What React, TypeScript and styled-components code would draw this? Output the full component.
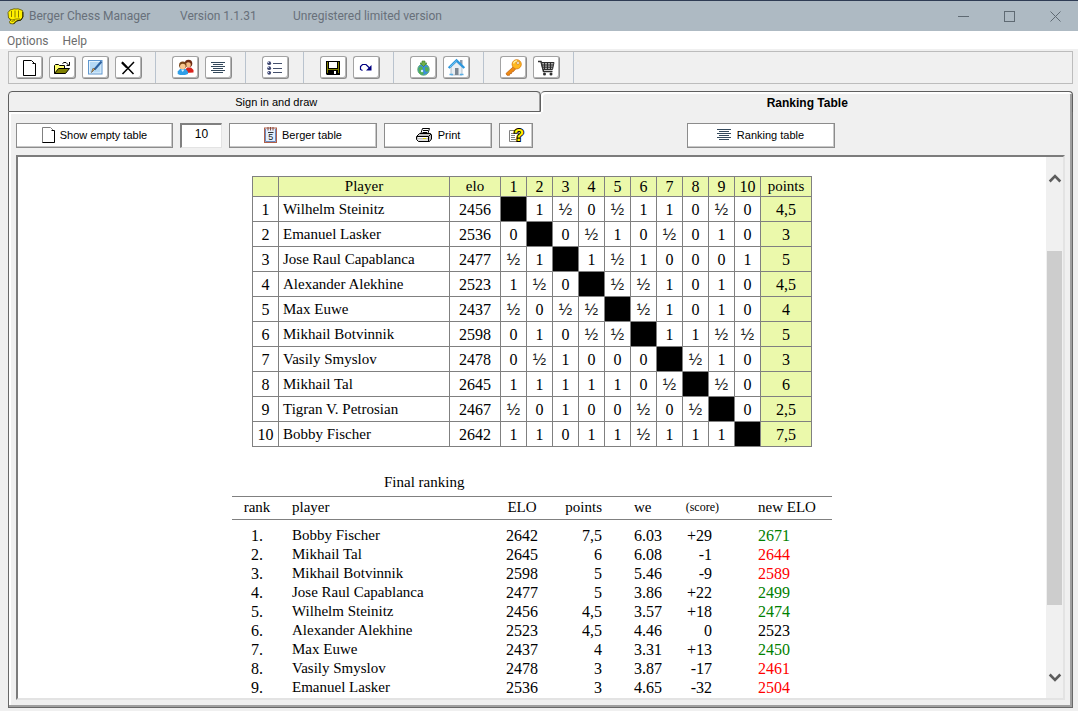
import React from "react";
import styled, { createGlobalStyle, css } from "styled-components";

const Global = createGlobalStyle`
  * { box-sizing: border-box; }
  html, body { margin: 0; padding: 0; background: #f0f0f0; }
  button, input { font: inherit; color: inherit; margin: 0; }
`;

const ui = `"Liberation Sans", Arial, sans-serif`;
const shell = `Roboto, "Open Sans", sans-serif`;
const serif = `"Liberation Serif", "Times New Roman", serif`;

const Window = styled.div`
  display: flex;
  flex-direction: column;
  height: 100vh;
  min-height: 480px;
  padding-bottom: 3px;
  background: #f0f0f0;
  color: #000;
  font: 11px/14px ${ui};
`;

const TitleBar = styled.header`
  display: flex;
  align-items: center;
  height: 31px;
  flex: none;
  border-top: 1px solid #2f3c54;
  background: #aebac3;
  color: #68707a;
  font: 12px/16px ${shell};
  padding-left: 7px;
`;

const TitleText = styled.span<{ $w?: number }>`
  min-width: ${(p) => (p.$w ? p.$w + "px" : "auto")};
  white-space: nowrap;
`;

const AppIcon = styled.span`
  display: flex;
  width: 22px;
`;

const WindowButtons = styled.div`
  display: flex;
  margin-left: auto;
`;

const WindowButton = styled.button`
  display: flex;
  align-items: center;
  justify-content: center;
  width: 46px;
  height: 30px;
  padding: 0;
  border: 0;
  background: none;
`;

const MenuBar = styled.nav`
  display: flex;
  align-items: center;
  gap: 14px;
  height: 18px;
  flex: none;
  padding: 2px 0 0 7px;
  background: #fff;
  color: #6d6d6d;
  font: 12px/16px ${shell};
`;

const MenuItem = styled.button`
  padding: 0;
  border: 0;
  background: none;
`;

const Toolbar = styled.div`
  display: flex;
  height: 33px;
  flex: none;
  margin: 2px 5px 0 8px;
  border: 1px solid #bcbcbc;
`;

const ToolGroup = styled.div<{ $first?: boolean }>`
  display: flex;
  align-items: center;
  gap: 6px;
  min-width: 58px;
  padding: 0 13px 0 ${(p) => (p.$first ? 7 : 16)}px;
  border-right: 1px solid #b9c3ce;
`;

const ToolButton = styled.button`
  display: flex;
  align-items: center;
  justify-content: center;
  width: 27px;
  height: 23px;
  padding: 0 1px 0 0;
  border: 1px solid #8b8b8b;
  border-top-color: #a3a3a3;
  border-left-color: #a3a3a3;
  border-radius: 3px;
  background: #fff;
  box-shadow: inset -1px -1px 0 #b4b4b4;
`;

const TabList = styled.div`
  display: grid;
  grid-template-columns: 1fr 1fr;
  flex: none;
  margin: 7px 5px 0 8px;
`;

const Tab = styled.button<{ $active?: boolean }>`
  height: 21px;
  padding: 0;
  background: #f0f0f0;
  border: 1px solid #5f5f5f;
  border-radius: 4px 4px 0 0;
  ${(p) =>
    p.$active
      ? css`
          border-left: 0;
          border-bottom: 0;
          box-shadow: inset 2px 2px 0 #fff, inset -2px 0 0 #a0a0a0;
          font-weight: bold;
          font-size: 12px;
          padding: 2px 0 0 2px;
        `
      : css`
          padding-left: 4px;
          box-shadow: inset -1px 0 0 #a0a0a0, 0 2px 0 #fff;
        `}
`;

const Panel = styled.section`
  display: flex;
  flex-direction: column;
  flex: 1;
  min-height: 0;
  margin: 0 5px 0 8px;
  padding: 11px 7px 7px 7px;
  border: 1px solid #696969;
  border-top: 0;
  box-shadow: inset -2px -2px 0 #a0a0a0, inset 2px 0 0 #fff;
`;

const Actions = styled.div`
  display: grid;
  grid-template-columns: 1fr 1fr;
  flex: none;
  height: 25px;
`;

const ActionGroup = styled.div<{ $end?: boolean }>`
  display: flex;
  gap: 7px;
  padding-left: ${(p) => (p.$end ? 146 : 0)}px;
`;

const ActionButton = styled.button<{ $w: number }>`
  display: flex;
  align-items: center;
  justify-content: center;
  gap: 5px;
  width: ${(p) => p.$w}px;
  height: 25px;
  padding: 0 0 1px;
  border: 1px solid #8c8c8c;
  background: #fff;
  box-shadow: inset -1px -1px 0 #c8c8c8;
  white-space: nowrap;
`;

const CountInput = styled.input`
  width: 42px;
  height: 25px;
  padding: 0 0 4px;
  border: 2px solid #808080;
  border-right: 1px solid #e3e3e3;
  border-bottom: 1px solid #e3e3e3;
  background: #fff;
  text-align: center;
  font-size: 12px;
  outline: 0;
`;

const Frame = styled.div`
  display: flex;
  flex: 1;
  min-height: 0;
  margin-top: 7px;
  border: 2px solid;
  border-color: #7c7c7c #e3e3e3 #e3e3e3 #7c7c7c;
  background: #fff;
`;

const Sheet = styled.main`
  flex: 1;
  overflow: hidden;
  padding-top: 19px;
  font: 16px/19px ${serif};
`;

const ScrollBar = styled.div`
  display: flex;
  flex-direction: column;
  width: 17px;
  flex: none;
  background: #f0f0f0;
`;

const ScrollButton = styled.button`
  display: flex;
  align-items: center;
  justify-content: center;
  height: 42px;
  flex: none;
  padding: 0;
  border: 0;
  background: none;
`;

const Track = styled.div<{ $grow: number; $thumb?: boolean }>`
  flex: ${(p) => p.$grow};
  margin: 0 1px;
  background: ${(p) => (p.$thumb ? "#cdcdcd" : "none")};
`;

const CrossTable = styled.table`
  width: 559px;
  margin: 0 auto;
  border-collapse: collapse;
  table-layout: fixed;
`;

const cell = css`
  padding: 0;
  border: 1px solid #808080;
  font-weight: normal;
  text-align: center;
`;

const HeadCell = styled.th<{ $word?: boolean }>`
  ${cell}
  height: 20px;
  background: #ebf9ab;
  ${(p) => p.$word && "font-size: 15px;"}
`;

const Cell = styled.td<{ $kind?: "name" | "self" | "points" }>`
  ${cell}
  height: 25px;
  ${(p) => p.$kind === "name" && "text-align: left; padding-left: 4px; font-size: 15px;"}
  ${(p) => p.$kind === "self" && "background: #000;"}
  ${(p) => p.$kind === "points" && "background: #ebf9ab;"}
`;

const Half = styled.span`
  font: 16px/16px ${ui};
  color: #222;
`;

const RankTable = styled.table`
  width: 600px;
  margin: 26px auto 0;
  border-collapse: collapse;
  table-layout: fixed;

  caption {
    padding: 0 0 4px 152px;
    text-align: left;
    font-size: 15px;
  }
  thead th {
    height: 23px;
    border-top: 1px solid #808080;
    border-bottom: 1px solid #808080;
  }
  tbody::before {
    content: "";
    display: block;
    height: 6px;
  }
`;

const align = css<{ $align?: string; $l?: number; $r?: number }>`
  padding: 0 ${(p) => p.$r ?? 0}px 0 ${(p) => p.$l ?? 0}px;
  text-align: ${(p) => p.$align ?? "left"};
  font-weight: normal;
`;

const RankHead = styled.th<{ $align?: string; $l?: number; $r?: number; $small?: boolean }>`
  ${align}
  padding-bottom: 2px;
  line-height: 18px;
  font-size: ${(p) => (p.$small ? 12 : 15)}px;
`;

const RankCell = styled.td<{
  $align?: string;
  $l?: number;
  $r?: number;
  $color?: string;
  $name?: boolean;
}>`
  ${align}
  height: 19px;
  color: ${(p) => p.$color ?? "inherit"};
  ${(p) => p.$name && "font-size: 15px;"}
`;

/* ---------- icons ---------- */

const Drawing = styled.svg`
  display: block;
  flex: none;
  overflow: visible;
`;

const Svg = ({ w = 18, h = 18, children }: { w?: number; h?: number; children: React.ReactNode }) => (
  <Drawing width={w} height={h} viewBox={`0 0 ${w} ${h}`} aria-hidden="true">
    {children}
  </Drawing>
);

const FistIcon = () => (
  <Svg w={17} h={17}>
    <path d="M1 4.500L3 2L5 1.500L7 .8L9 1L11 .8L13 1.500L15.500 2.500L16 5V9L14 12L9.500 13L6.500 16L3 15.500L2.500 13.500L4 12L1.500 10Z" fill="#fff000" stroke="#5a5200" strokeWidth=".8" />
    <path d="M4.500 3V9M8 2.500V9.500M11.500 2.500V9.500M2 10.500L5 12L9 11L13 11M4.500 13.500L8 12.500" stroke="#6b6200" fill="none" strokeWidth=".8" />
    <path d="M15.800 4V9L14 12L9.500 13L6.500 16" stroke="#2a2800" fill="none" />
  </Svg>
);

const PageIcon = ({ soft }: { soft?: boolean }) => (
  <Svg w={13} h={16}>
    <path d="M.5 .5H8.500L12.500 4.500V15.500H.5Z" fill="#fff" stroke={soft ? "#808080" : "#000"} />
    <path d="M9.500 3.500H12.500V15.500H.5" fill="none" stroke="#000" />
  </Svg>
);

const FolderIcon = () => (
  <Svg w={17} h={14}>
    <path d="M.5 12.500V4.500L1.500 3.500H4.500L5.500 4.500H10.500V7.500" fill="#ffff70" stroke="#000" />
    <path d="M.5 12.500L4.500 7.500H15.500L11.500 12.500Z" fill="#808000" stroke="#000" />
    <path d="M8.500 2.500L10 1.500H12L14.500 4M15.500 1V4.500H12.500" fill="none" stroke="#000" />
  </Svg>
);

const EditIcon = () => (
  <Svg w={15} h={15}>
    <rect x=".5" y=".5" width="13.500" height="13.500" fill="#e3f2fd" stroke="#5f97cf" />
    <rect x="2" y="2" width="10.500" height="10.500" fill="#b5d9f5" />
    <path d="M13.500 1.500L6.500 9.500" stroke="#2d62a0" strokeWidth="2" />
    <path d="M7 9L3.500 12.500L4.800 8.500Z" fill="#e8b060" stroke="#54412a" strokeWidth=".6" />
  </Svg>
);

const DeleteIcon = () => (
  <Svg w={14} h={14}>
    <path d="M1 1L12.500 13M13 1L1.500 13" stroke="#000" strokeWidth="1.500" fill="none" />
    <path d="M1 1.500L6 6.500" stroke="#000" strokeWidth="2.200" />
  </Svg>
);

const UsersIcon = () => (
  <Svg w={17} h={17}>
    <path d="M8 14V11L10 8.500H14L16.500 11V13.500Z" fill="#d9221c" />
    <circle cx="11.500" cy="4.500" r="3.800" fill="#6e2c14" />
    <circle cx="11.300" cy="5.800" r="2.500" fill="#f5bd84" />
    <path d="M.7 15V12.500L3 10H8.500L11 12.500V15L8 16H3Z" fill="#2f9fe8" />
    <path d="M4 10.500L5.700 13L7.500 10.500Z" fill="#d9f0ff" />
    <circle cx="5.800" cy="6.200" r="3.700" fill="#7a4416" />
    <circle cx="5.800" cy="7.500" r="2.800" fill="#f9c98f" />
  </Svg>
);

const LinesIcon = () => (
  <Svg w={15} h={12}>
    <path d="M0 .5H14M2 2.500H12M0 4.500H14M2 6.500H12M0 8.500H14M2 10.500H12" stroke="#34495c" />
  </Svg>
);

const ListIcon = () => (
  <Svg w={16} h={14}>
    <path d="M6 2.500H15M6 7.500H15M6 11.500H15" stroke="#44506c" />
    <circle cx="2.200" cy="2.200" r="1.900" fill="#3e4670" />
    <circle cx="2.200" cy="7.200" r="1.900" fill="#3e4670" />
    <circle cx="2.200" cy="11.800" r="1.900" fill="#3e4670" />
    <path d="M1 1.500H2M1 6.500H2M1 11.500H2" stroke="#c4d0ee" />
  </Svg>
);

const SaveIcon = () => (
  <Svg w={14} h={14}>
    <path d="M0 0H14V14H1L0 13Z" fill="#000" />
    <path d="M1 1H2V12H1ZM12 1H13V12H12ZM1 8H13V9H1Z" fill="#808000" />
    <rect x="3" y="1" width="8" height="6" fill="#fff" />
    <rect x="8" y="10" width="2" height="3" fill="#fff" />
  </Svg>
);

const RedoIcon = () => (
  <Svg w={14} h={10}>
    <path d="M3.500 7.500L1.500 6.500V3.500L3.500 1.500H7L10.500 5" fill="none" stroke="#000080" strokeWidth="1.200" />
    <path d="M12.500 2V7.500H7Z" fill="#000080" />
  </Svg>
);

const GlobeIcon = () => (
  <Svg w={15} h={16}>
    <circle cx="7.500" cy="9.500" r="5.700" fill="#3b8fdc" stroke="#5fae6a" />
    <path d="M2.500 8L5 6L7 8L6 11L8 13L6 15L3 13ZM9 7L12.500 7.500L12.500 11L10 12L9 10Z" fill="#52b053" />
    <circle cx="6" cy="11" r="1.200" fill="#d5efff" />
    <path d="M6 1H9V3H11L7.500 6.500L4 3H6Z" fill="#6fb04a" stroke="#3b7c2a" strokeWidth=".6" />
  </Svg>
);

const HouseIcon = () => (
  <Svg w={17} h={17}>
    <path d="M12 1H14.500V6L12 4Z" fill="#8d9cae" />
    <path d="M3 8L8.500 3L14 8V16H3Z" fill="#e9eef3" stroke="#9aa9b8" strokeWidth=".7" />
    <path d="M.7 9L8.500 1.500L16.300 9" fill="none" stroke="#2d97dd" strokeWidth="2.400" />
    <path d="M2 8L8.500 1.800" fill="none" stroke="#7fd0fb" strokeWidth=".8" />
    <rect x="7" y="9" width="3.500" height="7" fill="#7d8792" />
    <path d="M1.500 15.500H5M12 15.500H15.500" stroke="#57aee6" strokeWidth="1.500" />
  </Svg>
);

const KeyIcon = () => (
  <Svg w={17} h={17}>
    <path d="M8 8L1 14.500L2 16.300H4.500L5 14.500H6.500L7 12.800L8.500 12.500L10.500 10Z" fill="#ef8a12" stroke="#b85a08" strokeWidth=".7" />
    <circle cx="11.700" cy="5.300" r="4.600" fill="#ffb81f" stroke="#d77a0b" strokeWidth=".8" />
    <path d="M8.500 4.500A3.600 3.600 0 0 1 12 1.800" stroke="#fff0a0" fill="none" strokeWidth="1.200" />
    <circle cx="13" cy="4" r="1.400" fill="#fff" stroke="#b86a10" strokeWidth=".6" />
  </Svg>
);

const CartIcon = () => (
  <Svg w={17} h={16}>
    <path d="M0 1.500H3L5.500 11.500H14.500" fill="none" stroke="#2f2f2f" strokeWidth="1.500" />
    <path d="M3.500 2.500H16L14.500 9.500H5Z" fill="#a9a9a9" stroke="#2f2f2f" />
    <path d="M6.500 3V9.500M9.500 3V9.500M12.500 3V9.500M4 5H15M4.500 7.200H15" stroke="#2f2f2f" />
    <circle cx="6.500" cy="14" r="1.500" fill="#2f2f2f" />
    <circle cx="13" cy="14" r="1.500" fill="#2f2f2f" />
  </Svg>
);

const CalendarIcon = () => (
  <Svg w={13} h={16}>
    <rect x=".5" y="1" width="12" height="14.500" fill="#e3effd" stroke="#b0604a" />
    <path d="M1.500 2V14.500H11.500V2" fill="none" stroke="#6b8bc0" />
    <path d="M4 0V3.500M6.500 0V3.500M9 0V3.500" stroke="#8a4a3c" />
    <path d="M4 5.500H9.500" stroke="#333" />
    <text x="6.700" y="13" textAnchor="middle" fontFamily="Liberation Sans" fontSize="9" fill="#222">5</text>
  </Svg>
);

const PrinterIcon = () => (
  <Svg w={17} h={15}>
    <path d="M4.500 6.500L6.500 .5H13.500L11.500 6.500Z" fill="#fff" stroke="#000" />
    <path d="M7 2.500H12M6.500 4.500H11" stroke="#000" />
    <path d="M.5 8.500L3.500 5.500H14.500L15.500 7V11L13.500 13.500H2.500L.5 11.500Z" fill="#c0c0c0" stroke="#000" />
    <path d="M1 8.500H12.500L15 6M12.500 8.500V13" stroke="#000" fill="none" />
    <path d="M2 9.500H12M2 12H12" stroke="#fff" />
    <path d="M7 10.500H10" stroke="#e5d800" />
  </Svg>
);

const HelpIcon = () => (
  <Svg w={14} h={16}>
    <path d="M.5 3.500H9.500V14.500H.5Z" fill="#fff" stroke="#808080" />
    <path d="M2 6.500H6M2 8.500H6M2 10.500H6M2 12.500H7" stroke="#808080" />
    <text x="10" y="14" textAnchor="middle" fontFamily="Liberation Sans" fontWeight="bold" fontSize="17" fill="#ffee00" stroke="#000" strokeWidth="2" paintOrder="stroke">?</text>
  </Svg>
);

const Chevron = ({ down }: { down?: boolean }) => (
  <Svg w={12} h={9}>
    <path d={down ? "M.7 1.500L6 6.800L11.300 1.500" : "M.7 7.500L6 2.200L11.300 7.500"} fill="none" stroke="#5c5c5c" strokeWidth="2.600" />
  </Svg>
);

/* ---------- data ---------- */

const players: [string, number, string, string][] = [
  ["Wilhelm Steinitz", 2456, "x1h0h110h0", "4,5"],
  ["Emanuel Lasker", 2536, "0x0h10h010", "3"],
  ["Jose Raul Capablanca", 2477, "h1x1h10001", "5"],
  ["Alexander Alekhine", 2523, "1h0xhh1010", "4,5"],
  ["Max Euwe", 2437, "h0hhxh1010", "4"],
  ["Mikhail Botvinnik", 2598, "010hhx11hh", "5"],
  ["Vasily Smyslov", 2478, "0h1000xh10", "3"],
  ["Mikhail Tal", 2645, "111110hxh0", "6"],
  ["Tigran V. Petrosian", 2467, "h0100h0hx0", "2,5"],
  ["Bobby Fischer", 2642, "11011h111x", "7,5"],
];

const ranking: [string, number, string, string, string, number][] = [
  ["Bobby Fischer", 2642, "7,5", "6.03", "+29", 2671],
  ["Mikhail Tal", 2645, "6", "6.08", "-1", 2644],
  ["Mikhail Botvinnik", 2598, "5", "5.46", "-9", 2589],
  ["Jose Raul Capablanca", 2477, "5", "3.86", "+22", 2499],
  ["Wilhelm Steinitz", 2456, "4,5", "3.57", "+18", 2474],
  ["Alexander Alekhine", 2523, "4,5", "4.46", "0", 2523],
  ["Max Euwe", 2437, "4", "3.31", "+13", 2450],
  ["Vasily Smyslov", 2478, "3", "3.87", "-17", 2461],
  ["Emanuel Lasker", 2536, "3", "4.65", "-32", 2504],
];

const tools: [string, React.ReactNode][][] = [
  [["New", <PageIcon />], ["Open", <FolderIcon />], ["Edit", <EditIcon />], ["Delete", <DeleteIcon />]],
  [["Players", <UsersIcon />], ["Ranking", <LinesIcon />]],
  [["List", <ListIcon />]],
  [["Save", <SaveIcon />], ["Redo", <RedoIcon />]],
  [["Update", <GlobeIcon />], ["Home page", <HouseIcon />]],
  [["Register", <KeyIcon />], ["Buy", <CartIcon />]],
];

const trend = (from: number, to: number) => (to > from ? "#008000" : to < from ? "#ff0000" : undefined);

export default function App() {
  return (
    <>
      <Global />
      <Window>
        <TitleBar>
          <AppIcon><FistIcon /></AppIcon>
          <TitleText $w={151}>Berger Chess Manager</TitleText>
          <TitleText $w={113}>Version 1.1.31</TitleText>
          <TitleText>Unregistered limited version</TitleText>
          <WindowButtons>
            <WindowButton aria-label="Minimize">
              <Svg w={11} h={11}><path d="M0 5.500H11" stroke="#5f6a73" /></Svg>
            </WindowButton>
            <WindowButton aria-label="Maximize">
              <Svg w={11} h={11}><rect x=".5" y=".5" width="10" height="10" fill="none" stroke="#5f6a73" /></Svg>
            </WindowButton>
            <WindowButton aria-label="Close">
              <Svg w={11} h={11}><path d="M.5 .5L10.500 10.500M10.500 .5L.5 10.500" stroke="#5f6a73" /></Svg>
            </WindowButton>
          </WindowButtons>
        </TitleBar>

        <MenuBar>
          <MenuItem>Options</MenuItem>
          <MenuItem>Help</MenuItem>
        </MenuBar>

        <Toolbar role="toolbar">
          {tools.map((group, i) => (
            <ToolGroup key={i} $first={i === 0}>
              {group.map(([label, icon]) => (
                <ToolButton key={label} aria-label={label}>{icon}</ToolButton>
              ))}
            </ToolGroup>
          ))}
        </Toolbar>

        <TabList role="tablist">
          <Tab role="tab" aria-selected={false}>Sign in and draw</Tab>
          <Tab role="tab" aria-selected $active>Ranking Table</Tab>
        </TabList>

        <Panel role="tabpanel">
          <Actions>
            <ActionGroup>
              <ActionButton $w={157}><PageIcon soft />Show empty table</ActionButton>
              <CountInput aria-label="Number of players" defaultValue="10" />
              <ActionButton $w={148}><CalendarIcon />Berger table</ActionButton>
              <ActionButton $w={108}><PrinterIcon />Print</ActionButton>
              <ActionButton $w={34} aria-label="Help"><HelpIcon /></ActionButton>
            </ActionGroup>
            <ActionGroup $end>
              <ActionButton $w={148}><LinesIcon />Ranking table</ActionButton>
            </ActionGroup>
          </Actions>

          <Frame>
            <Sheet>
              <CrossTable>
                <colgroup>
                  <col width="26" />
                  <col width="171" />
                  <col width="51" />
                  {players.map((p) => <col key={p[0]} width="26" />)}
                  <col width="51" />
                </colgroup>
                <thead>
                  <tr>
                    <HeadCell />
                    <HeadCell $word>Player</HeadCell>
                    <HeadCell $word>elo</HeadCell>
                    {players.map((p, i) => <HeadCell key={p[0]}>{i + 1}</HeadCell>)}
                    <HeadCell $word>points</HeadCell>
                  </tr>
                </thead>
                <tbody>
                  {players.map(([name, elo, results, points], i) => (
                    <tr key={name}>
                      <Cell>{i + 1}</Cell>
                      <Cell $kind="name">{name}</Cell>
                      <Cell>{elo}</Cell>
                      {results.split("").map((r, j) => (
                        <Cell key={j} $kind={r === "x" ? "self" : undefined}>
                          {r === "h" ? <Half>½</Half> : r === "x" ? null : r}
                        </Cell>
                      ))}
                      <Cell $kind="points">{points}</Cell>
                    </tr>
                  ))}
                </tbody>
              </CrossTable>

              <RankTable>
                <caption>Final ranking</caption>
                <colgroup>
                  <col width="50" />
                  <col width="214" />
                  <col width="52" />
                  <col width="54" />
                  <col width="70" />
                  <col width="50" />
                  <col width="110" />
                </colgroup>
                <thead>
                  <tr>
                    <RankHead $align="center">rank</RankHead>
                    <RankHead $l={10}>player</RankHead>
                    <RankHead $align="center">ELO</RankHead>
                    <RankHead $align="right">points</RankHead>
                    <RankHead $l={32}>we</RankHead>
                    <RankHead $align="right" $r={3} $small>(score)</RankHead>
                    <RankHead $l={36}>new ELO</RankHead>
                  </tr>
                </thead>
                <tbody>
                  {ranking.map(([name, elo, points, we, score, next], i) => (
                    <tr key={name}>
                      <RankCell $align="center">{i + 1}.</RankCell>
                      <RankCell $l={10} $name>{name}</RankCell>
                      <RankCell $align="center">{elo}</RankCell>
                      <RankCell $align="right">{points}</RankCell>
                      <RankCell $l={32}>{we}</RankCell>
                      <RankCell $align="right" $r={10}>{score}</RankCell>
                      <RankCell $l={36} $color={trend(elo, next)}>{next}</RankCell>
                    </tr>
                  ))}
                </tbody>
              </RankTable>
            </Sheet>
            <ScrollBar>
              <ScrollButton aria-label="Scroll up"><Chevron /></ScrollButton>
              <Track $grow={52} />
              <Track $grow={354} $thumb />
              <Track $grow={51} />
              <ScrollButton aria-label="Scroll down"><Chevron down /></ScrollButton>
            </ScrollBar>
          </Frame>
        </Panel>
      </Window>
    </>
  );
}
